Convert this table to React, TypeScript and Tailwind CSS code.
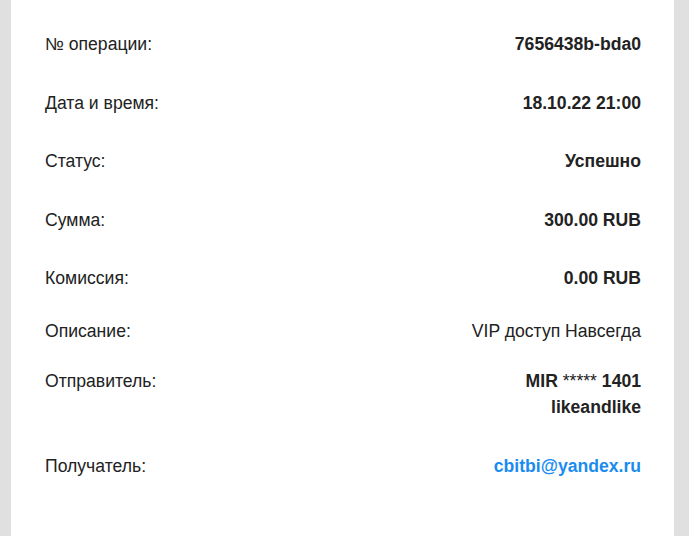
import React from "react";

export default function App() {
  const font = { fontFamily: '"Liberation Sans", Arial, sans-serif' };
  return (
    <div className="min-h-[536px] w-[689px] bg-[#e0e0e0]" style={font}>
      <div className="ml-[11px] w-[663px] min-h-[536px] bg-white pl-[34px] pr-[33px] pt-[31px] text-[17.6px] leading-[26px] text-[#222222]">
        <div className="flex justify-between">
          <span>№ операции:</span>
          <span className="font-bold">7656438b-bda0</span>
        </div>
        <div className="mt-[33px] flex justify-between">
          <span>Дата и время:</span>
          <span className="font-bold">18.10.22 21:00</span>
        </div>
        <div className="mt-[32px] flex justify-between">
          <span>Статус:</span>
          <span className="font-bold">Успешно</span>
        </div>
        <div className="mt-[33px] flex justify-between">
          <span>Сумма:</span>
          <span className="font-bold">300.00 RUB</span>
        </div>
        <div className="mt-[32px] flex justify-between">
          <span>Комиссия:</span>
          <span className="font-bold">0.00 RUB</span>
        </div>
        <div className="mt-[27px] flex justify-between">
          <span>Описание:</span>
          <span>VIP доступ Навсегда</span>
        </div>
        <div className="mt-[24px] flex justify-between">
          <span>Отправитель:</span>
          <div className="flex flex-col items-end font-bold">
            <span>
              MIR <span className="font-normal">*****</span> 1401
            </span>
            <span>likeandlike</span>
          </div>
        </div>
        <div className="mt-[33px] flex justify-between">
          <span>Получатель:</span>
          <span className="font-bold text-[#1a8cf0]">cbitbi@yandex.ru</span>
        </div>
      </div>
    </div>
  );
}
